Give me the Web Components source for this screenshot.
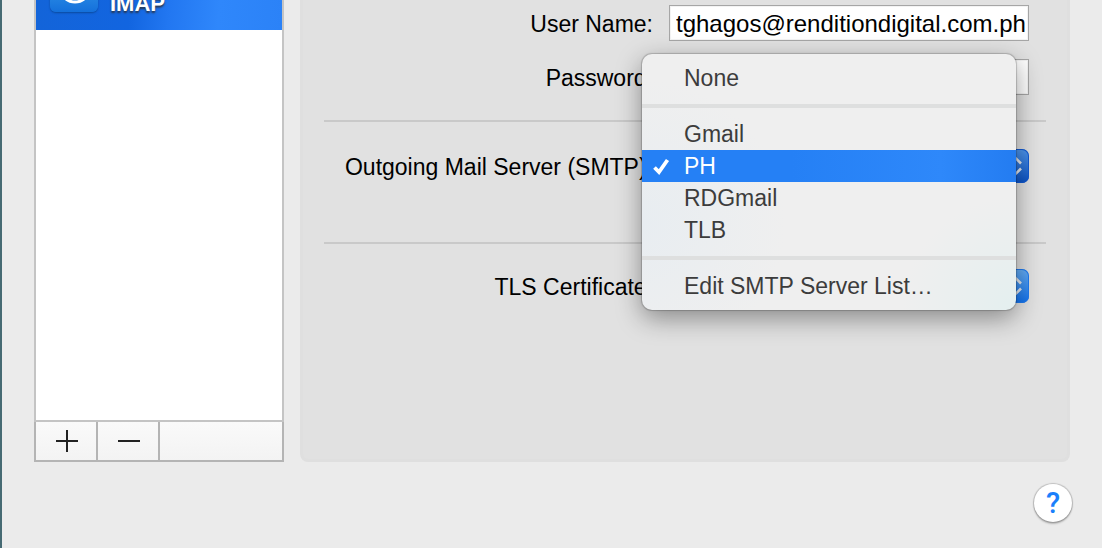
<!DOCTYPE html>
<html lang="en">
<head>
<meta charset="utf-8">
<title>Accounts</title>
<style>
  body { margin: 0; background: #ebebeb; font-family: "Liberation Sans", Arial, sans-serif; font-size: 23px; line-height: 32px; color: #000; }
</style>
</head>
<body>
<mail-preferences>
  <account-list slot="sidebar">
    <account-row>IMAP</account-row>
  </account-list>
  <account-panel slot="panel">
    <text-row label="User Name:" value="tghagos@renditiondigital.com.ph"></text-row>
    <text-row label="Password:" type="password"></text-row>
    <hr>
    <select-row label="Outgoing Mail Server (SMTP):" value="PH" pressed>
      <popup-menu slot="menu">
        <menu-item>None</menu-item>
        <menu-divider></menu-divider>
        <menu-item>Gmail</menu-item>
        <menu-item checked>PH</menu-item>
        <menu-item>RDGmail</menu-item>
        <menu-item>TLB</menu-item>
        <menu-divider></menu-divider>
        <menu-item>Edit SMTP Server List…</menu-item>
      </popup-menu>
    </select-row>
    <hr class="far">
    <select-row label="TLS Certificate:" value="None"></select-row>
  </account-panel>
  <help-button slot="footer"></help-button>
</mail-preferences>

<script>
function define(name, render) {
  customElements.define(name, class extends HTMLElement {
    constructor() {
      super();
      this.attachShadow({ mode: "open" }).innerHTML = render(this);
    }
  });
}

define("mail-preferences", () => `
  <style>
    :host { display: flex; flex-direction: column; box-sizing: border-box; min-height: 100vh; border-left: 2px solid #466a73; overflow: hidden; }
    main { flex: 1; display: grid; grid-template-columns: 250px 1fr; gap: 16px; padding: 0 32px; }
    footer { display: flex; justify-content: flex-end; padding: 22px 30px 26px; }
  </style>
  <main><slot name="sidebar"></slot><slot name="panel"></slot></main>
  <footer><slot name="footer"></slot></footer>`);

define("account-list", () => `
  <style>
    :host { display: flex; flex-direction: column; }
    .list { flex: 1; background: #fff; border: 2px solid #c4c4c4; border-top: 0; }
    .bar { display: flex; height: 38px; border: 2px solid #b4b4b4; border-top: 0; background: linear-gradient(#fafafa, #f3f3f3); }
    button { display: grid; place-items: center; width: 62px; padding: 0; border: 0; background: none; box-shadow: inset -2px 0 #b4b4b4; }
    svg { display: block; width: 22px; height: 22px; fill: #222; }
  </style>
  <div class="list"><slot></slot></div>
  <div class="bar">
    <button aria-label="Add account"><svg viewBox="0 0 22 22"><path d="M10 0h2v10h10v2H12v10h-2V12H0v-2h10z"/></svg></button>
    <button aria-label="Remove account"><svg viewBox="0 0 22 22"><path d="M0 10h22v2H0z"/></svg></button>
  </div>`);

define("account-row", () => `
  <style>
    :host { display: flex; align-items: flex-end; gap: 12px; box-sizing: border-box; height: 30px; padding: 0 14px 14px; overflow: hidden;
      background: linear-gradient(95deg, #1364d9, #1265e0 38%, #2277f1 54%, #2f87fb 74%, #2b82f7); color: #fff; }
    svg { display: block; flex: none; width: 48px; height: 48px; margin-bottom: 4px; border-radius: 6px; box-shadow: 0 1px 2px #0a4a9c; }
    span { font-size: 22px; font-weight: bold; line-height: 24px; text-shadow: 0 2px 2px #29364c; }
  </style>
  <svg viewBox="0 0 48 48" aria-hidden="true">
    <defs><linearGradient id="g" x2="0" y2="1"><stop stop-color="#45adf0"/><stop offset="1" stop-color="#1470db"/></linearGradient></defs>
    <rect width="48" height="48" fill="url(#g)"/>
    <circle cx="25" cy="23" r="15" fill="none" stroke="#fff" stroke-width="3"/>
  </svg>
  <span><slot></slot></span>`);

define("account-panel", () => `
  <style>
    :host { display: block; padding: 5px 21px 24px; background: #e1e1e1; border: 3px solid #dfdfdf; border-top: 0; border-radius: 0 0 8px 8px; }
    ::slotted(text-row) { margin-bottom: 18px; }
    ::slotted(hr) { height: 2px; margin: 25px 0 27px; border: 0; background: #c9c9c9; }
    ::slotted(hr.far) { margin: 59px 0 25px; }
    ::slotted(text-row:nth-of-type(2)) { margin-bottom: 0; }
  </style>
  <slot></slot>`);

const rowStyle = `
  :host { display: grid; grid-template-columns: 1fr 360px; align-items: center; gap: 16px; padding-right: 17px; }
  label { padding-top: 2px; text-align: right; white-space: nowrap; }`;

define("text-row", el => `
  <style>${rowStyle}
    input { box-sizing: border-box; width: 100%; height: 36px; margin: 0; padding: 2px 0 0 6px; border: 1px solid #a6a6a6; border-radius: 0;
      background: #fff; box-shadow: inset 0 0 0 1px #f3f3f3; font: inherit; font-size: 24px; color: #000; outline: 0; }
  </style>
  <label for="field">${el.getAttribute("label")}</label>
  <input id="field" type="${el.getAttribute("type") || "text"}" value="${el.getAttribute("value") || ""}">`);

define("select-row", el => `
  <style>${rowStyle}
    .control { position: relative; height: 34px; }
    select { appearance: none; box-sizing: border-box; width: 100%; height: 34px; margin: 0; padding: 0 40px 0 14px; border: 1px solid #c4c4c4;
      border-radius: 8px; background: #fff; font: inherit; color: #000; }
    svg { position: absolute; top: 0; right: 0; width: 32px; height: 34px; box-sizing: border-box; border-radius: 0 7px 7px 0; pointer-events: none;
      background: linear-gradient(#66aef5, #1272ee); box-shadow: inset 0 0 0 1px #1f7af0; }
    :host([pressed]) svg { background: linear-gradient(#4f97ee, #0b52c4); box-shadow: inset 0 0 0 1px #1259d2; }
    ::slotted([slot="menu"]) { position: absolute; left: -27px; top: -95px; z-index: 1; }
  </style>
  <label for="field">${el.getAttribute("label")}</label>
  <div class="control">
    <select id="field"><option>${el.getAttribute("value")}</option></select>
    <svg viewBox="0 0 32 34" aria-hidden="true"><path d="M10 14.500L17 7.500L24 14.500M10 19.500L17 26.500L24 19.500" fill="none" stroke="#e4eaf2" stroke-width="2.600"/></svg>
    <slot name="menu"></slot>
  </div>`);

define("popup-menu", () => `
  <style>
    :host { display: block; box-sizing: border-box; width: 374px; padding: 8px 0; border-radius: 10px;
      background: radial-gradient(circle at 0 66%, #e8edf1, #e8edf100 35%), radial-gradient(circle at 100% 100%, #e4efef, #e4efef00 25%), #efefef;
      box-shadow: 0 0 1px 1px #00000030, 0 8px 26px #00000066; }
  </style>
  <div role="menu"><slot></slot></div>`);

define("menu-item", el => `
  <style>
    :host { display: block; }
    button { display: flex; align-items: center; box-sizing: border-box; width: 100%; height: 32px; padding: 0; border: 0; background: none;
      font: inherit; color: #3c3c3c; text-align: left; }
    .mark { display: flex; justify-content: center; width: 42px; }
    svg { display: none; width: 18px; height: 18px; margin-right: 4px; }
    :host([checked]) button { background: linear-gradient(90deg, #2580f5, #2580f5 40%, #2e88fa 80%, #237cf1); color: #fff; }
    :host([checked]) svg { display: block; }
  </style>
  <button role="menuitemradio" aria-checked="${el.hasAttribute("checked")}">
    <span class="mark"><svg viewBox="0 0 18 18" aria-hidden="true"><path d="M2.500 10.500L7 15L15.500 3" fill="none" stroke="#fff" stroke-width="3.800"/></svg></span>
    <slot></slot>
  </button>`);

define("menu-divider", () => `
  <style>:host { display: block; height: 4px; margin: 10px 0; background: #dedfdf; }</style>`);

define("help-button", () => `
  <style>
    :host { display: block; }
    button { display: grid; place-items: center; width: 38px; height: 38px; padding: 0; border: 0; border-radius: 50%; background: #fff;
      box-shadow: 0 0 1px 1px #00000030, 0 2px 2px #00000038; font: 500 29px/38px Roboto, sans-serif; color: #1a80fb; }
  </style>
  <button aria-label="Help">?</button>`);
</script>
</body>
</html>
